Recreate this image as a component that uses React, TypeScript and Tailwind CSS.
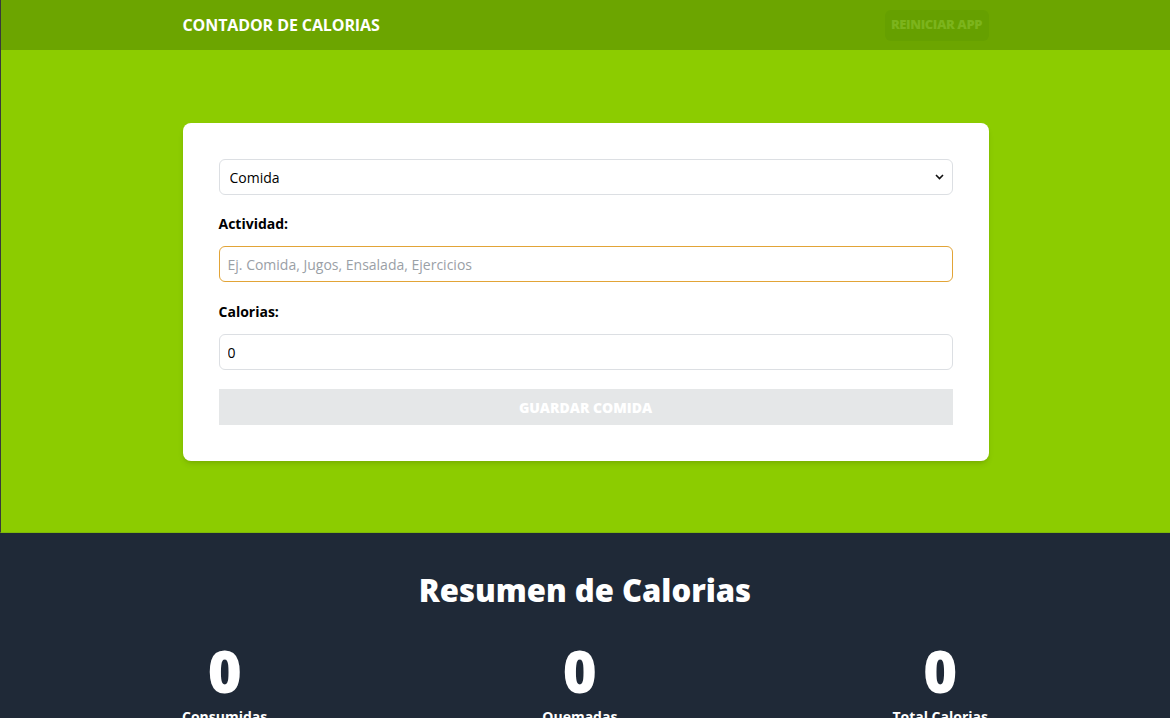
import { useState } from 'react'

const font = { fontFamily: '"Open Sans", "Noto Sans", sans-serif' }

function Stat({ value, label }: { value: number; label: string }) {
  return (
    <div className="flex flex-col items-center text-white">
      <span className="text-[58px] font-extrabold leading-[60px]">{value}</span>
      <span className="mt-[6px] text-[14px] font-bold leading-5">{label}</span>
    </div>
  )
}

export default function App() {
  const [category, setCategory] = useState('1')
  const [name, setName] = useState('')
  const [calories, setCalories] = useState(0)

  const isValid = name.trim() !== '' && calories > 0

  return (
    <div className="min-h-screen bg-white" style={font}>
      {/* header */}
      <header className="h-[50px] bg-[#6ca500] border-l border-[#3a3a3a]">
        <div className="mx-auto flex h-full w-[806px] items-center justify-between">
          <h1 className="text-[16px] font-bold uppercase text-white tracking-[-0.1px]">
            Contador de Calorias
          </h1>
          <button
            type="button"
            disabled
            className="h-[31px] w-[104px] rounded-md bg-[#66a000] text-[13px] font-extrabold uppercase text-[#7cb41c] tracking-[-0.4px]"
          >
            Reiniciar App
          </button>
        </div>
      </header>

      {/* formulario */}
      <section className="bg-[#8ccc00] border-l border-[#3a3a3a] border-b border-b-[#7fb80a] pt-[73px] pb-[71px]">
        <form className="mx-auto w-[806px] rounded-lg bg-white p-9 shadow-md">
          <div className="flex flex-col gap-5">
            <div className="relative -mb-px">
              <select
                value={category}
                onChange={(e) => setCategory(e.target.value)}
                className="h-9 w-full appearance-none rounded-md border border-[#dcdfe3] bg-white pl-2.5 text-[14px] text-black outline-none"
              >
                <option value="1">Comida</option>
                <option value="2">Ejercicio</option>
              </select>
              <svg
                className="pointer-events-none absolute right-[9px] top-[15px]"
                width="9"
                height="6"
                viewBox="0 0 9 6"
                fill="none"
              >
                <path d="M1 1l3.5 3.5L8 1" stroke="#111" strokeWidth="1.6" />
              </svg>
            </div>

            <div className="flex flex-col gap-3">
              <label htmlFor="name" className="text-[14px] font-bold leading-5 text-black">
                Actividad:
              </label>
              <input
                id="name"
                type="text"
                value={name}
                onChange={(e) => setName(e.target.value)}
                placeholder="Ej. Comida, Jugos, Ensalada, Ejercicios"
                className="h-9 w-full rounded-md border-[1.5px] border-[#e2a437] px-2 text-[14px] outline-none placeholder:text-[#9aa0a6]"
              />
            </div>

            <div className="flex flex-col gap-3">
              <label htmlFor="calories" className="text-[14px] font-bold leading-5 text-black">
                Calorias:
              </label>
              <input
                id="calories"
                type="number"
                value={calories}
                onChange={(e) => setCalories(+e.target.value)}
                className="h-9 w-full rounded-md border border-[#dcdfe3] px-2 text-[14px] outline-none"
              />
            </div>

            <button
              type="submit"
              disabled={!isValid}
              className="-mt-px h-9 w-full bg-[#e5e7e8] text-[14px] font-extrabold uppercase text-white"
            >
              Guardar Comida
            </button>
          </div>
        </form>
      </section>

      {/* resumen */}
      <section className="bg-[#1f2937] pt-[39px] pb-10">
        <div className="mx-auto w-[806px]">
          <h2 className="text-center text-[31px] font-extrabold leading-9 text-white">
            Resumen de Calorias
          </h2>
          <div className="mt-[33px] flex justify-between">
            <Stat value={0} label="Consumidas" />
            <Stat value={0} label="Quemadas" />
            <Stat value={0} label="Total Calorias" />
          </div>
        </div>
      </section>
    </div>
  )
}
